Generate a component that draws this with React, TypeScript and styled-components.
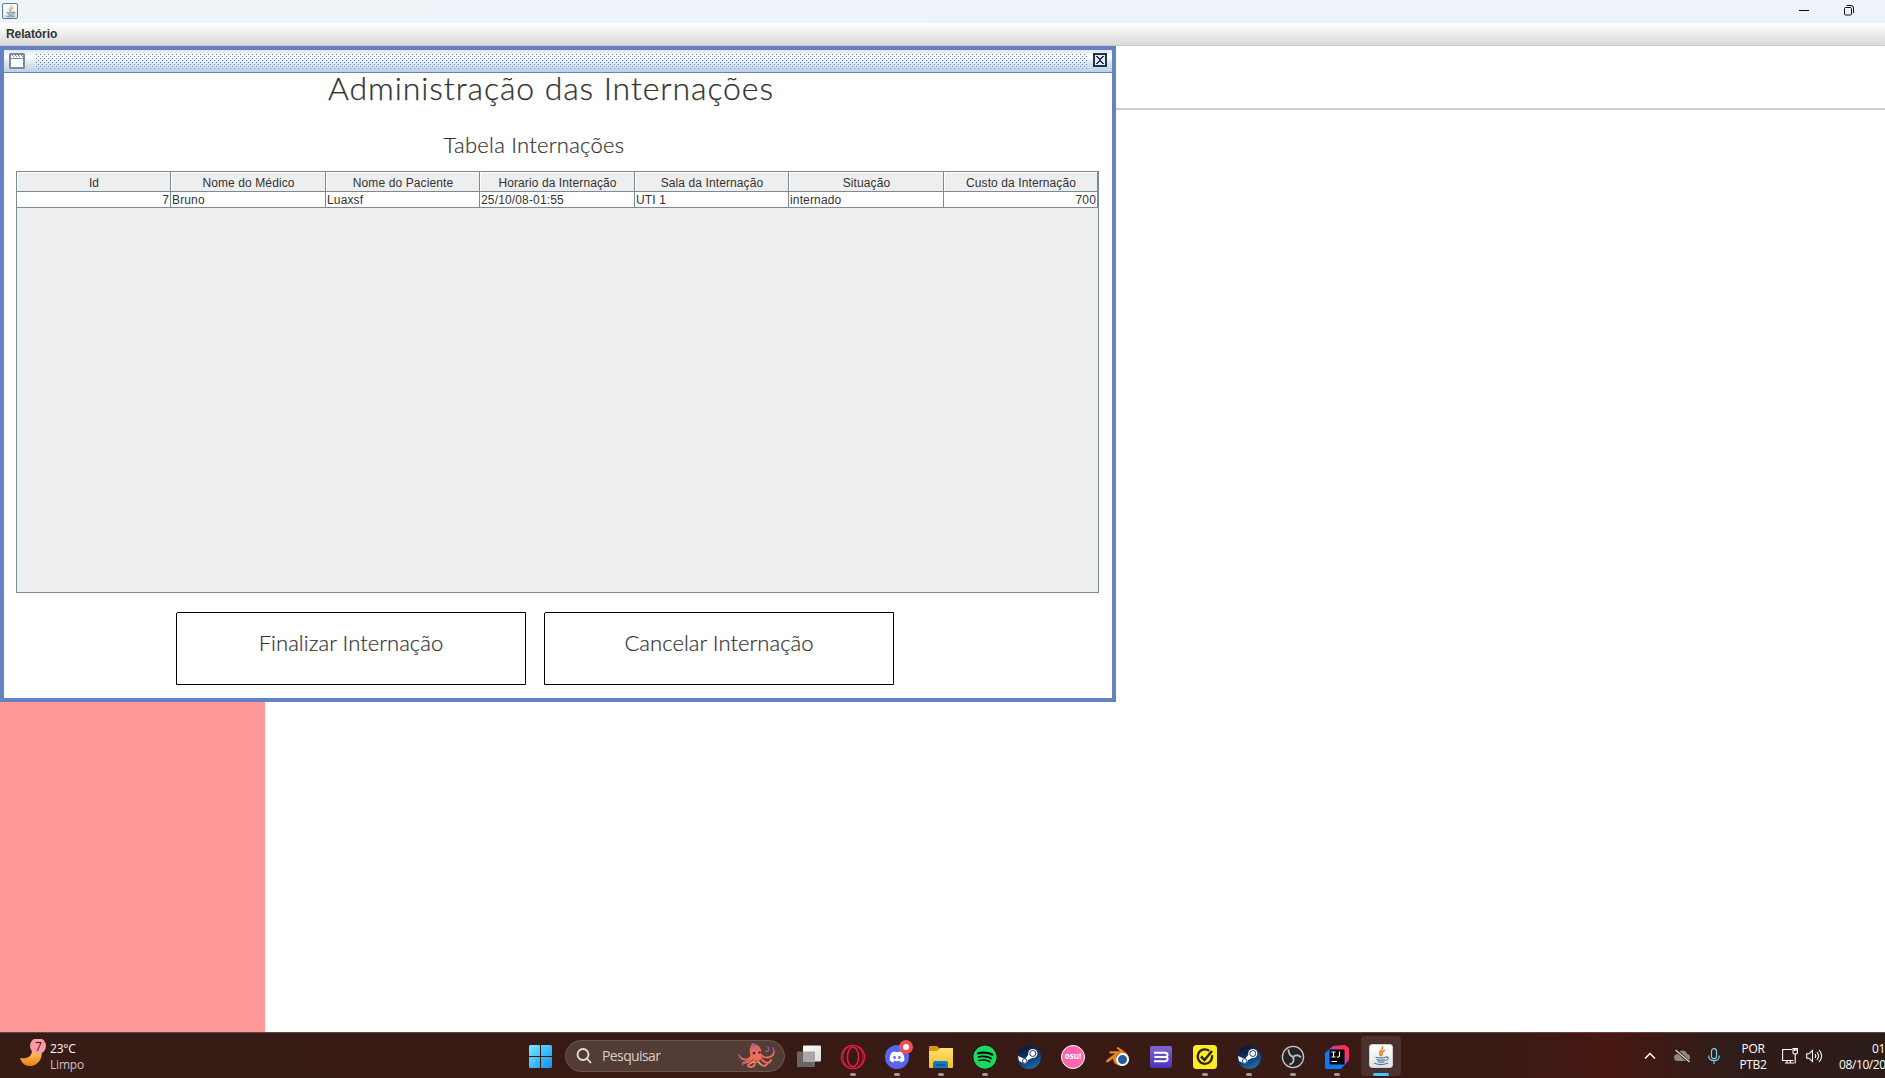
import React from "react";
import styled, { createGlobalStyle } from "styled-components";
import { FaDiscord, FaSpotify } from "react-icons/fa";
import { SiBlender } from "react-icons/si";

const Global = createGlobalStyle`
  html, body { margin: 0; padding: 0; background: #fff; overflow: hidden; }
  * { box-sizing: border-box; }
`;

const swing = `"Liberation Sans", Arial, sans-serif`;
const shell = `"Open Sans", "Noto Sans", sans-serif`;

const Screen = styled.div`
  width: 1885px;
  height: 1078px;
  display: flex;
  flex-direction: column;
  overflow: hidden;
  background: #fff;
  color: #333;
  font-family: ${swing};
`;

const WindowBar = styled.header`
  height: 23px;
  flex: none;
  display: flex;
  align-items: center;
  padding: 0 31px 3px 2px;
  background: linear-gradient(90deg, #eef4f8, #eef3fa);
`;

const WindowControls = styled.div`
  margin-left: auto;
  display: flex;
  gap: 35px;
`;

const JavaTile = styled.span<{ $size: number }>`
  width: ${(p) => p.$size}px;
  height: ${(p) => p.$size}px;
  display: flex;
  align-items: center;
  justify-content: center;
  border-radius: ${(p) => (p.$size > 20 ? 3 : 2)}px;
  border: 1px solid ${(p) => (p.$size > 20 ? "#c9d1d8" : "#587891")};
  background: linear-gradient(#fff, #dde3e8);
  ${(p) => p.$size < 20 && "margin-top: 2px;"}
`;

const MenuBar = styled.nav`
  height: 23px;
  flex: none;
  display: flex;
  align-items: center;
  padding: 0 6px;
  font-size: 12px;
  font-weight: 700;
  letter-spacing: -0.1px;
  border-bottom: 1px solid #ccc;
  background: linear-gradient(#fff, #dadada);
`;

const Desktop = styled.main`
  position: relative;
  flex: 1;
  display: flex;
  flex-direction: column;
`;

const Banner = styled.div`
  height: 64px;
  flex: none;
  border-bottom: 2px solid #ccc;
`;

const SidePanel = styled.div`
  width: 265px;
  flex: 1;
  background: #ff9999;
`;

const Frame = styled.section`
  position: absolute;
  left: 0;
  top: 0;
  width: 1116px;
  height: 656px;
  display: flex;
  flex-direction: column;
  border: 4px solid #6382bf;
  background: #fff;
`;

const FrameBar = styled.div`
  height: 23px;
  flex: none;
  display: flex;
  align-items: center;
  padding: 0 5px;
  border-bottom: 1px solid #6382bf;
  background: linear-gradient(#dfe9f4 0, #fff 7px, #dfe9f3 12px, #b8cfe5 23px);
`;

const CloseIcon = styled.svg`
  margin-bottom: 2px;
`;

const Bumps = styled.div`
  flex: 1;
  height: 16px;
  margin: 0 6px 0 10px;
  background-image: conic-gradient(from 270deg at 1px 1px, #6382bf 90deg, transparent 0),
    conic-gradient(from 270deg at 1px 1px, #6382bf 90deg, transparent 0),
    conic-gradient(from 270deg at 1px 1px, #fff 90deg, transparent 0),
    conic-gradient(from 270deg at 1px 1px, #fff 90deg, transparent 0);
  background-size: 4px 4px;
  background-position: 1px 1px, 3px 3px, 2px 2px, 0 0;
`;

const FrameBody = styled.div`
  flex: 1;
  display: flex;
  flex-direction: column;
  padding: 0 13px 0 12px;
`;

const Title = styled.h1`
  margin: 0;
  height: 54px;
  padding-right: 13px;
  font: 300 32px/30px Lato, sans-serif;
  letter-spacing: 0.9px;
  -webkit-text-stroke: 0.25px #333;
  text-align: center;
  white-space: nowrap;
`;

const Subtitle = styled.h2`
  margin: 0;
  height: 44px;
  padding-right: 47px;
  font: 300 22px/36px Lato, sans-serif;
  letter-spacing: 0.26px;
  -webkit-text-stroke: 0.2px #333;
  text-align: center;
  white-space: nowrap;
`;

const TablePane = styled.div`
  height: 422px;
  border: 1px solid #7a8a99;
  background: #eee;
`;

const Row = styled.div<{ $head?: boolean }>`
  display: grid;
  grid-template-columns: 154px 155px 154px 155px 154px 155px 154px;
  height: ${(p) => (p.$head ? 20 : 16)}px;
  font-size: 12px;
  letter-spacing: ${(p) => (p.$head ? 0.1 : 0.15)}px;
  background: ${(p) => (p.$head ? "#eee" : "#fff")};
`;

const HeadCell = styled.div`
  display: flex;
  justify-content: center;
  align-items: center;
  border-right: 1px solid #7a8a99;
  border-bottom: 1px solid #7a8a99;
  box-shadow: inset 1px 1px #fff;
  padding: 2px 0 0 1px;
  white-space: nowrap;
`;

const Cell = styled.div<{ $right?: boolean }>`
  height: 16px;
  padding: 0 1px;
  line-height: 17px;
  text-align: ${(p) => (p.$right ? "right" : "left")};
  border-right: 1px solid #7a8a99;
  border-bottom: 1px solid #7a8a99;
`;

const Actions = styled.div`
  display: flex;
  gap: 18px;
  padding: 19px 0 0 160px;
`;

const ActionButton = styled.button`
  width: 350px;
  height: 73px;
  padding: 0 0 11px;
  border: 1px solid #000;
  border-top-left-radius: 2px;
  background: #fff;
  color: #333;
  font: 300 22px/30px Lato, sans-serif;
  letter-spacing: 0.04px;
  -webkit-text-stroke: 0.2px #333;
`;

const Taskbar = styled.footer`
  height: 46px;
  flex: none;
  display: flex;
  border-top: 1px solid #5b4642;
  background: linear-gradient(90deg, #371b15 0, #391a14 1500px, #481812 1610px, #301c18 1720px, #2c1c19 100%);
  color: #fff;
  font: 12px/16px ${shell};
`;

const Weather = styled.div`
  width: 518px;
  display: flex;
  padding: 6px 0 0 20px;
  gap: 4px;
`;

const WeatherText = styled.div`
  padding-top: 2px;
  letter-spacing: -0.2px;
  span { display: block; }
  span + span { color: #c9c0be; }
`;

const Slot = styled.div<{ $active?: boolean }>`
  position: relative;
  width: ${(p) => (p.$active ? 40 : 44)}px;
  height: ${(p) => (p.$active ? 40 : 46)}px;
  margin: ${(p) => (p.$active ? "3px 2px 0" : "0")};
  padding-top: ${(p) => (p.$active ? 0 : 1)}px;
  display: flex;
  align-items: center;
  justify-content: center;
  border-radius: 4px;
  background: ${(p) => (p.$active ? "#4b322d" : "transparent")};
`;

const Indicator = styled.i<{ $active?: boolean }>`
  position: absolute;
  bottom: ${(p) => (p.$active ? 0 : 3)}px;
  width: ${(p) => (p.$active ? 16 : 6)}px;
  height: 3px;
  border-radius: 2px;
  background: ${(p) => (p.$active ? "#4cc2ff" : "#a59a98")};
`;

const Search = styled.div`
  width: 220px;
  height: 32px;
  margin: 7px 2px 0 3px;
  display: flex;
  align-items: center;
  padding: 0 8px 0 10px;
  border: 1px solid #6b5550;
  border-radius: 16px;
  background: #533c36;
  color: #d6cecc;
  font-size: 14px;
  span { flex: 1; margin-left: 10px; letter-spacing: -0.6px; }
`;

const Disc = styled.span<{ $bg: string }>`
  width: 24px;
  height: 24px;
  border-radius: 50%;
  display: flex;
  align-items: center;
  justify-content: center;
  background: ${(p) => p.$bg};
`;

const OsuDisc = styled(Disc)`
  border: 1.5px solid #fff;
  font: 700 8px/20px ${shell};
  padding-bottom: 1px;
`;

const AlertDot = styled.i`
  position: absolute;
  left: 24px;
  top: 7px;
  width: 14px;
  height: 14px;
  border: 4px solid #ed4f55;
  border-radius: 50%;
  background: #fff;
`;

const Tray = styled.div`
  margin-left: auto;
  display: flex;
  align-items: center;
  height: 46px;
`;

const TrayIcon = styled.span<{ $gap: number }>`
  display: flex;
  margin-right: ${(p) => p.$gap}px;
`;

const TrayText = styled.div<{ $right?: boolean }>`
  width: ${(p) => (p.$right ? 46 : 28)}px;
  margin-right: ${(p) => (p.$right ? 0 : 15)}px;
  text-align: ${(p) => (p.$right ? "right" : "center")};
  letter-spacing: ${(p) => (p.$right ? "-0.4px" : "-0.3px")};
  span { display: block; white-space: nowrap; }
  padding-top: 1px;
`;

const headers = ["Id", "Nome do Médico", "Nome do Paciente", "Horario da Internação", "Sala da Internação", "Situação", "Custo da Internação"];
const record = ["7", "Bruno", "Luaxsf", "25/10/08-01:55", "UTI 1", "internado", "700"];

const JavaCup = ({ size }: { size: number }) => (
  <svg width={size} height={size} viewBox="0 0 20 20" fill="none" strokeLinecap="round">
    <path d="M11.5 1C12.5 4 6.5 5 9.5 9.5M13.5 4.5C9.5 6 11.5 7.5 10.7 9.5" stroke="#ee7d22" strokeWidth="1.5" />
    <path d="M5 11.3C7 12.2 12 12.1 14.5 11.2M6 13.6Q10 14.7 13.6 13.6M7 15.7Q10 16.7 13 15.7M3.5 17.3Q10 20 16.8 17M14.5 11C18.5 10.2 17.5 14 14.5 14.5" stroke="#527c9c" strokeWidth="1.2" />
  </svg>
);

const Moon = () => (
  <svg width="26" height="32" viewBox="0 0 26 32">
    <defs><linearGradient id="moon" x1="0" y1="0" x2="0" y2="1"><stop stopColor="#ffcf57" /><stop offset="1" stopColor="#ee7d18" /></linearGradient></defs>
    <path d="M0 19C7 20 12 18 12 11L21 11C24 19 17 28 9 27Q2 26 0 19Z" fill="url(#moon)" />
    <circle cx="18" cy="7" r="8" fill="#ff99a4" />
    <text x="18.500" y="11.500" textAnchor="middle" fontFamily="Open Sans" fontSize="12" fill="#3b1114">7</text>
  </svg>
);

const WindowsLogo = () => (
  <svg width="24" height="24" viewBox="0 0 24 24">
    <defs><linearGradient id="win" x1="0" y1="0" x2="1" y2="1"><stop stopColor="#79eaff" /><stop offset="1" stopColor="#0a91f7" /></linearGradient></defs>
    <path d="M2 0H12V11H1V1ZM13 0H23L24 1V11H13ZM1 12H12V23H2L1 22ZM13 12H24V22L23 23H13Z" fill="url(#win)" />
  </svg>
);

const Octopus = () => (
  <svg width="38" height="26" viewBox="0 0 38 26" fill="none" strokeLinecap="round">
    <defs><linearGradient id="octo" x1="0" y1="0" x2="0" y2="1"><stop stopColor="#a9568d" /><stop offset=".5" stopColor="#f4704f" /><stop offset="1" stopColor="#ef6b61" /></linearGradient></defs>
    <g stroke="#ed6d5d" strokeWidth="1.900">
      <path d="M14 12C11 18 6 18 2 14M15 14C12 20 9 19 5 20M17 15C15 22 9 20 10 23C12 25 17 24 17 20M20 15C20 22 27 25 29 21M22 14C26 21 32 21 33 17M23 12C28 17 36 14 36 8" />
    </g>
    <path d="M3 15L1 12M36 9L35 5M6 20L4 22M28 8C31 9 31 6 30 4" stroke="#8e5d9b" strokeWidth="1.500" />
    <path d="M12 11C11 5 13 3 14 0C19 1 24 4 23 9L23 16Q18 20 14 15Z" fill="url(#octo)" />
    <circle cx="16" cy="10" r="1.500" fill="#442c57" /><circle cx="21.500" cy="9.500" r="1.300" fill="#442c57" />
    <path d="M13 20Q18 17 23 21" stroke="#ffab74" />
  </svg>
);

const TaskView = () => (
  <svg width="24" height="24" viewBox="0 0 24 24">
    <defs><linearGradient id="task" x1="0" y1="0" x2="1" y2="1"><stop stopColor="#fff" /><stop offset="1" stopColor="#ddd" /></linearGradient></defs>
    <rect y="6.500" width="18" height="15.500" rx="1" fill="#6b6563" />
    <rect x="6" y="0.500" width="18" height="16" rx="1" fill="url(#task)" />
    <path d="M6 6.500H18V16.500H6Z" fill="#aaa7a6" />
  </svg>
);

const OperaGX = () => (
  <svg width="26" height="26" viewBox="0 0 26 26" fill="none" stroke="#ef174d">
    <circle cx="13" cy="13" r="11.500" strokeWidth="1.400" />
    <ellipse cx="13" cy="13" rx="5.600" ry="9.800" strokeWidth="1.500" />
    <path d="M9 2.500C1 8 1 18 9 23.500M17 2.500C25 8 25 18 17 23.500" strokeWidth=".9" />
  </svg>
);

const Folder = () => (
  <svg width="24" height="24" viewBox="0 0 24 24">
    <defs><linearGradient id="fold" x1="0" y1="0" x2="0" y2="1"><stop stopColor="#ffe071" /><stop offset="1" stopColor="#f9be2c" /></linearGradient></defs>
    <path d="M0 2Q0 1 1 1H8L10 3H10V7H0Z" fill="#d79a10" />
    <path d="M0 6H8L11 3H24V22Q24 23 23 23H1Q0 23 0 22Z" fill="url(#fold)" />
    <path d="M4 23V18Q4 16 6 16H17Q19 16 19 18V23Z" fill="#117ac7" /><path d="M7 19H16V21H7Z" fill="#0b5a9e" />
  </svg>
);

const BApp = () => (
  <svg width="22" height="22" viewBox="0 0 22 22">
    <defs><linearGradient id="bapp" x1="0" y1="0" x2="0" y2="1"><stop stopColor="#8066cf" /><stop offset="1" stopColor="#4b32bb" /></linearGradient></defs>
    <rect width="22" height="22" rx="2" fill="url(#bapp)" />
    <path d="M4 6.700H15Q17.500 6.700 17.500 8.800T15.500 11H4.500M15.500 11Q17.500 11 17.500 13.200T15 15.300H4" fill="none" stroke="#fff" strokeWidth="2" />
  </svg>
);

const Norton = () => (
  <svg width="24" height="24" viewBox="0 0 24 24" fill="none" stroke="#252313">
    <rect width="24" height="24" rx="3.500" fill="#ffea28" stroke="none" />
    <path d="M16.200 5.800A7.200 7.200 0 1 0 19 10.300" strokeWidth="2.200" />
    <path d="M8 11.500L11.500 15L19 6" strokeWidth="2.500" />
  </svg>
);

const Obs = () => (
  <svg width="24" height="24" viewBox="0 0 24 24">
    <circle cx="12" cy="12" r="10.600" fill="#252326" stroke="#c9c5c5" strokeWidth="1.300" />
    <g fill="none" stroke="#bdb9ba" strokeWidth="1.900">
      <path d="M7.500 4.500C7.500 9 9.500 11 12 12M20 12.500C17.500 9.500 14.500 10 12 12M8.500 19.500C12.500 18.500 13.500 15 12 12" />
    </g>
  </svg>
);

const IntelliJ = () => (
  <svg width="24" height="24" viewBox="0 0 24 24">
    <defs><linearGradient id="ij" x1="0" y1="1" x2="1" y2="0"><stop offset=".4" stopColor="#087cfa" /><stop offset=".55" stopColor="#8a56c5" /><stop offset=".75" stopColor="#fe315d" /></linearGradient></defs>
    <path d="M0 8L8 1L20 0L24 3V15L16 24H1L0 22Z" fill="url(#ij)" />
    <rect x="4.500" y="4.500" width="15" height="15" fill="#000" />
    <path d="M6.500 7H10.500M8.500 7V12M6.500 12H10.500M14.500 6.500V10.500Q14.500 12 13 12H11.800M6.500 16.500H12" fill="none" stroke="#fff" strokeWidth="1.200" />
  </svg>
);

const Steam = () => (
  <Disc $bg="linear-gradient(155deg, #111c3a 20%, #12417b 60%, #1b86bd)">
    <svg width="24" height="24" viewBox="0 0 24 24">
      <path d="M1 11L8 14L12 9L17 12L11 15Q10 20 6 18L2 16Z" fill="#fff" />
      <circle cx="15.800" cy="8.500" r="4.600" fill="#fff" /><circle cx="15.800" cy="8.500" r="3" fill="none" stroke="#233e65" strokeWidth="1" />
      <circle cx="7.700" cy="16" r="2.300" fill="none" stroke="#235280" />
    </svg>
  </Disc>
);

const Blender = styled.span`
  position: relative;
  display: flex;
  &::after {
    content: "";
    position: absolute;
    left: 10px;
    top: 8px;
    width: 9px;
    height: 9px;
    border: 2px solid #fff;
    border-radius: 50%;
    background: #1f5c9c;
  }
`;

const App = () => (
  <Screen>
    <Global />
    <WindowBar>
      <JavaTile $size={16}><JavaCup size={13} /></JavaTile>
      <WindowControls>
        <svg width="10" height="11" viewBox="0 0 10 11"><path d="M0 5.500H10" stroke="#111" /></svg>
        <svg width="10" height="11" viewBox="0 0 10 11" fill="none" stroke="#111"><rect x=".5" y="2.500" width="7" height="7.500" rx="1" /><path d="M2.500 .5H7Q9.500 .5 9.500 3V8" /></svg>
      </WindowControls>
    </WindowBar>
    <MenuBar>Relatório</MenuBar>
    <Desktop>
      <Banner />
      <SidePanel />
      <Frame>
        <FrameBar>
          <svg width="16" height="16" viewBox="0 0 16 16">
            <rect x="1" y="1" width="14" height="14" rx=".5" fill="#fff" stroke="#7a8a99" strokeWidth="2" />
            <path d="M2 5.500H14" stroke="#7a8a99" />
            <path d="M3 2.500H14M4 3.500H14" stroke="#6382bf" strokeDasharray="1 2" />
          </svg>
          <Bumps />
          <CloseIcon width="14" height="14" viewBox="0 0 14 14" shapeRendering="crispEdges">
            <path d="M1 13.500H13.500V1" stroke="#fff" fill="none" />
            <rect x="1" y="1" width="12" height="12" fill="#dfe9f4" stroke="#23334f" strokeWidth="2" />
            <path d="M3 3H5V4H6V5H8V4H9V3H11V4H10V5H9V6H8V8H9V9H10V10H11V11H9V10H8V9H6V10H5V11H3V10H4V9H5V8H6V6H5V5H4V4H3Z" fill="#23334f" />
          </CloseIcon>
        </FrameBar>
        <FrameBody>
          <Title>Administração das Internações</Title>
          <Subtitle>Tabela Internações</Subtitle>
          <TablePane>
            <Row $head>{headers.map((h) => <HeadCell key={h}>{h}</HeadCell>)}</Row>
            <Row>{record.map((v, i) => <Cell key={headers[i]} $right={i === 0 || i === 6}>{v}</Cell>)}</Row>
          </TablePane>
          <Actions>
            <ActionButton>Finalizar Internação</ActionButton>
            <ActionButton>Cancelar Internação</ActionButton>
          </Actions>
        </FrameBody>
      </Frame>
    </Desktop>
    <Taskbar>
      <Weather>
        <Moon />
        <WeatherText><span>23°C</span><span>Limpo</span></WeatherText>
      </Weather>
      <Slot><WindowsLogo /></Slot>
      <Search>
        <svg width="16" height="16" viewBox="0 0 16 16" fill="none" stroke="#e6e0df" strokeWidth="1.800"><circle cx="7" cy="6.500" r="5.500" /><path d="M11 10.500L15 15" /></svg>
        <span>Pesquisar</span>
        <Octopus />
      </Search>
      <Slot><TaskView /></Slot>
      <Slot><OperaGX /><Indicator /></Slot>
      <Slot><Disc $bg="#5865f2"><FaDiscord size={16} /></Disc><AlertDot /><Indicator /></Slot>
      <Slot><Folder /><Indicator /></Slot>
      <Slot><Disc $bg="#000"><FaSpotify size={24} color="#1ed760" /></Disc><Indicator /></Slot>
      <Slot><Steam /></Slot>
      <Slot><OsuDisc $bg="#ff66ab">osu!</OsuDisc></Slot>
      <Slot><Blender><SiBlender size={23} color="#e8841e" /></Blender></Slot>
      <Slot><BApp /></Slot>
      <Slot><Norton /><Indicator /></Slot>
      <Slot><Steam /><Indicator /></Slot>
      <Slot><Obs /><Indicator /></Slot>
      <Slot><IntelliJ /><Indicator /></Slot>
      <Slot $active><JavaTile $size={24}><JavaCup size={20} /></JavaTile><Indicator $active /></Slot>
      <Tray>
        <TrayIcon $gap={18}><svg width="12" height="8" viewBox="0 0 12 8" fill="none" stroke="#fff" strokeWidth="1.500"><path d="M1 6.500L6 1.500L11 6.500" /></svg></TrayIcon>
        <TrayIcon $gap={17}><svg width="17" height="14" viewBox="0 0 17 14"><path d="M4 12Q0 12 0 8.500T4 5Q5 1 9 1.500T13 5Q16 5 16 8.500T13 12Z" fill="#8f8784" /><path d="M2 1L15 13" stroke="#2c1c19" strokeWidth="3" /><path d="M1.500 1L15.500 13" stroke="#ddd" strokeWidth="1.200" /></svg></TrayIcon>
        <TrayIcon $gap={19}><svg width="12" height="16" viewBox="0 0 12 16" fill="none" stroke="#76d5ee" strokeWidth="1.200"><rect x="3.500" y=".7" width="5" height="10" rx="2.500" /><path d="M.7 7.500Q.7 12.700 6 12.700T11.300 7.500M6 13V16" /></svg></TrayIcon>
        <TrayText><span>POR</span><span>PTB2</span></TrayText>
        <TrayIcon $gap={8}><svg width="16" height="16" viewBox="0 0 16 16" fill="none" stroke="#fff" strokeWidth="1.100"><path d="M10 1.500H.6V12.500H11.500M5 12.500V15M8.500 12.500V15M3 15H12M11 .6H15.400V5Q15.400 6 13.200 6T11 5ZM13.200 6V15.500M12.500 .6V3M14 .6V3" /></svg></TrayIcon>
        <TrayIcon $gap={16}><svg width="17" height="14" viewBox="0 0 17 14" fill="none" stroke="#fff" strokeWidth="1.100"><path d="M.7 4.800V9.200H3L6.500 12.500V1.500L3 4.800ZM9 5Q10.500 7 9 9M11 3Q14 7 11 11M13.200 1Q18 7 13.200 13" /></svg></TrayIcon>
        <TrayText $right><span>01</span><span>08/10/20</span></TrayText>
      </Tray>
    </Taskbar>
  </Screen>
);

export default App;
